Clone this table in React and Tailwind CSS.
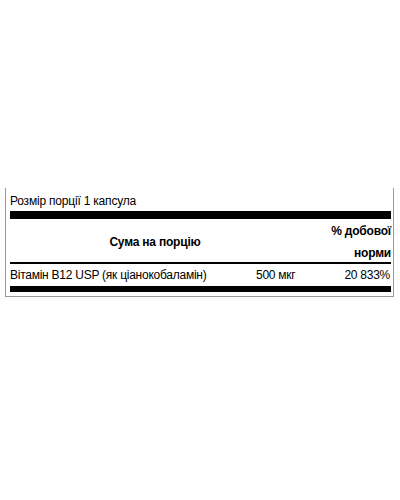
export default function App() {
  return (
    <div className="w-[400px] h-[500px] bg-white" style={{ fontFamily: '"Liberation Sans", Arial, sans-serif' }}>
      <div className="pt-[188px] pl-[5px] pr-[6px]">
        <div className="border-l border-r border-b border-[#9a9a9a] pl-[4px] pr-[2px] pb-[4px] text-[12px] text-black">
          <div className="h-[23px] pt-[6px] leading-[14px] tracking-[-0.2px]">Розмір порції 1 капсула</div>
          <div className="h-[8px] bg-black" />
          <div className="flex h-[43px]">
            <div className="w-[290px] flex items-center justify-center font-bold pt-[2px] tracking-[-0.2px]">Сума на порцію</div>
            <div className="flex-1 flex flex-col items-end font-bold leading-[22px] pt-[1px] tracking-[-0.2px]">
              <span>% добової</span>
              <span>норми</span>
            </div>
          </div>
          <div className="h-[2px] bg-black" />
          <div className="flex h-[22px] items-center tracking-[-0.25px]">
            <div className="w-[246px]">Вітамін B12 USP (як ціанокобаламін)</div>
            <div className="w-[60px]">500 мкг</div>
            <div className="flex-1 text-right pr-[1px]">20 833%</div>
          </div>
          <div className="h-[6px] bg-black" />
        </div>
      </div>
    </div>
  );
}
